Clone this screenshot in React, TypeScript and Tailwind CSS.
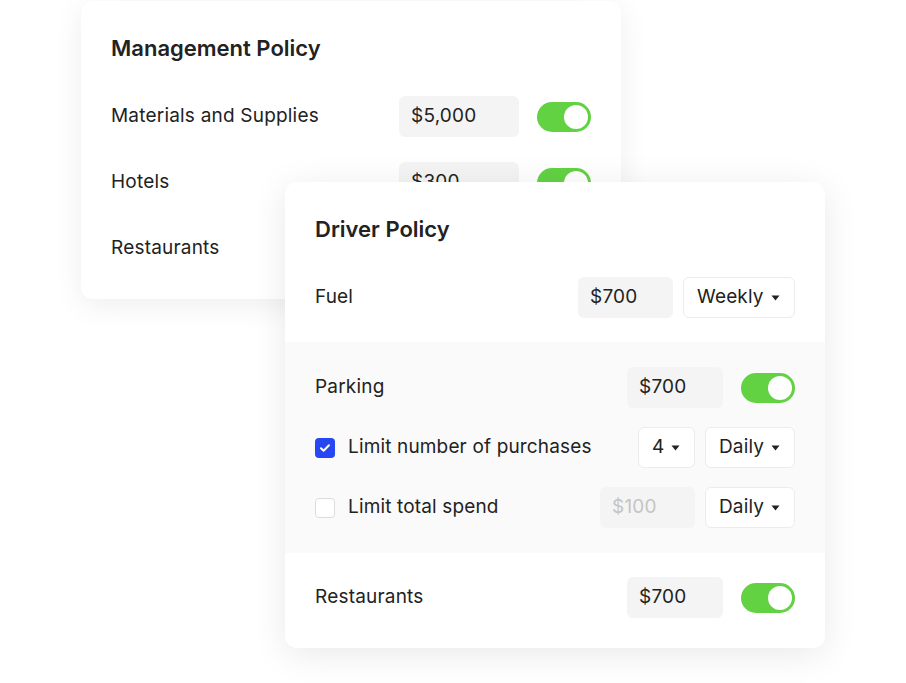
import React from "react";

const font = { fontFamily: "Inter, 'Noto Sans', sans-serif" };

function Toggle() {
    return (
        <div className="flex h-[30px] w-[54px] shrink-0 items-center justify-end rounded-full bg-[#62d243] pr-[3px]">
            <div className="h-[24px] w-[24px] rounded-full bg-white" />
        </div>
    );
}

function Amount({ value, width, disabled }: { value: string; width: string; disabled?: boolean }) {
    return (
        <div
            className={`flex h-[41px] shrink-0 items-center rounded-md bg-[#f4f4f4] pl-3 text-[19px] tracking-[0.2px] ${width} ${
                disabled ? "text-[#c4c4c4]" : "text-[#222]"
            }`}
        >
            {value}
        </div>
    );
}

function Caret() {
    return (
        <svg width="9" height="6" viewBox="0 0 9 6" className="shrink-0">
            <path d="M0.5 0.5h8L4.5 5.5z" fill="#222" />
        </svg>
    );
}

function Select({ value, width }: { value: string; width: string }) {
    return (
        <div
            className={`flex h-[41px] shrink-0 items-center justify-between rounded-md border border-[#ececec] bg-white pl-[13px] pr-[14px] text-[19px] tracking-[0.15px] text-[#222] ${width}`}
        >
            <span>{value}</span>
            <Caret />
        </div>
    );
}

function Checkbox({ checked }: { checked?: boolean }) {
    if (checked) {
        return (
            <div className="flex h-[20px] w-[20px] shrink-0 items-center justify-center rounded-[4px] bg-[#2747f3]">
                <svg width="12" height="10" viewBox="0 0 12 10">
                    <path d="M2 5.2l2.6 2.5L10 2.3" fill="none" stroke="white" strokeWidth="2" strokeLinecap="round" strokeLinejoin="round" />
                </svg>
            </div>
        );
    }
    return <div className="h-[20px] w-[20px] shrink-0 rounded-[4px] border border-[#dcdcdc] bg-white" />;
}

function Row({ label, children }: { label: React.ReactNode; children: React.ReactNode }) {
    return (
        <div className="flex h-[41px] items-center justify-between">
            <div className="flex items-center gap-[13px] text-[19px] tracking-[0.15px] text-[#222]">{label}</div>
            <div className="flex items-center gap-[10px]">{children}</div>
        </div>
    );
}

function ToggleRow({ label, value, width }: { label: string; value: string; width: string }) {
    return (
        <div className="flex h-[41px] items-center justify-between">
            <span className="text-[19px] tracking-[0.2px] text-[#222]">{label}</span>
            <div className="flex items-center gap-[18px]">
                <Amount value={value} width={width} />
                <Toggle />
            </div>
        </div>
    );
}

export default function App() {
    return (
        <div className="relative h-[683px] w-[906px] overflow-hidden bg-white" style={font}>
            {/* Management card */}
            <div className="ml-[81px] mt-px w-[540px] rounded-xl bg-white px-[30px] pb-[30px] pt-[33px] shadow-[0_6px_30px_rgba(0,0,0,0.07)]">
                <h2 className="text-[22px] font-semibold leading-[28px] text-[#222]">Management Policy</h2>
                <div className="mt-[34px] flex flex-col gap-[25px]">
                    <ToggleRow label="Materials and Supplies" value="$5,000" width="w-[120px]" />
                    <ToggleRow label="Hotels" value="$300" width="w-[120px]" />
                    <ToggleRow label="Restaurants" value="$200" width="w-[120px]" />
                </div>
            </div>

            {/* Driver card */}
            <div className="absolute left-[285px] top-[182px] w-[540px] overflow-hidden rounded-xl bg-white shadow-[0_6px_36px_rgba(0,0,0,0.09)]">
                <div className="px-[30px] pb-[24px] pt-[33px]">
                    <h2 className="text-[22px] font-semibold leading-[28px] text-[#222]">Driver Policy</h2>
                    <div className="mt-[34px]">
                        <Row label="Fuel">
                            <Amount value="$700" width="w-[95px]" />
                            <Select value="Weekly" width="w-[112px]" />
                        </Row>
                    </div>
                </div>
                <div className="flex flex-col gap-[19px] bg-[#fafafa] px-[30px] py-[25px]">
                    <ToggleRow label="Parking" value="$700" width="w-[96px]" />
                    <Row
                        label={
                            <>
                                <Checkbox checked />
                                <span>Limit number of purchases</span>
                            </>
                        }
                    >
                        <Select value="4" width="w-[57px]" />
                        <Select value="Daily" width="w-[90px]" />
                    </Row>
                    <Row
                        label={
                            <>
                                <Checkbox />
                                <span>Limit total spend</span>
                            </>
                        }
                    >
                        <Amount value="$100" width="w-[95px]" disabled />
                        <Select value="Daily" width="w-[90px]" />
                    </Row>
                </div>
                <div className="px-[30px] pb-[30px] pt-[24px]">
                    <ToggleRow label="Restaurants" value="$700" width="w-[96px]" />
                </div>
            </div>
        </div>
    );
}
